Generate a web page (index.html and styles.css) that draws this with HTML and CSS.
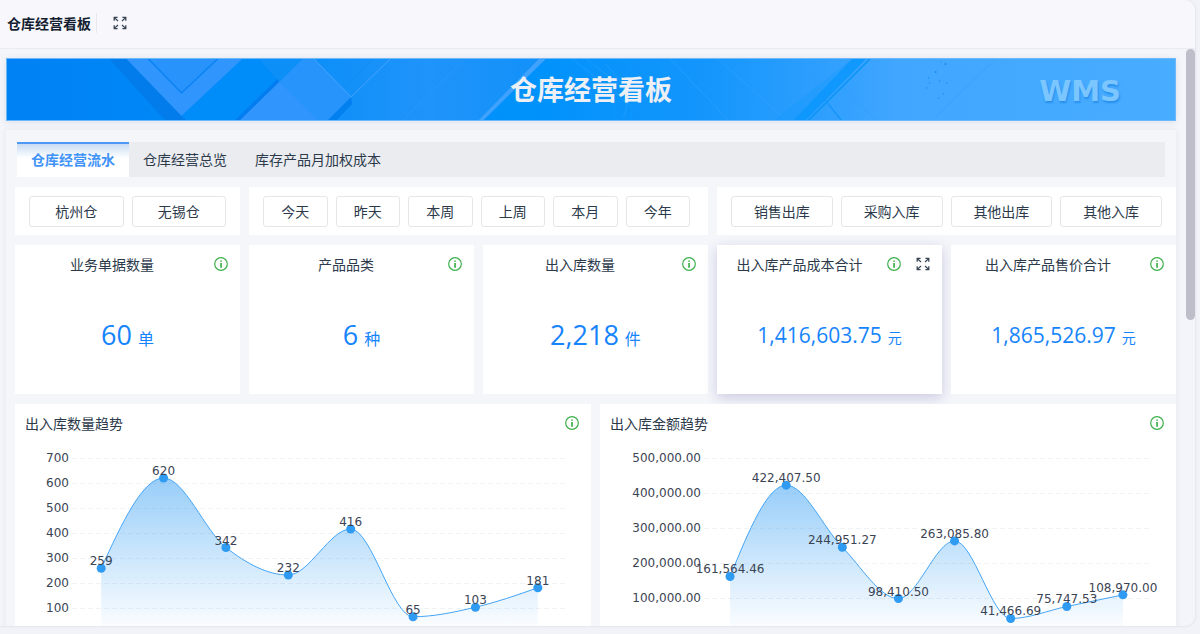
FILE: index.html
```html
<!DOCTYPE html>
<html lang="zh-CN">

<head>
    <meta charset="UTF-8">
    <meta name="viewport" content="width=device-width, initial-scale=1.0">
    <title>仓库经营看板</title>
    <link rel="stylesheet" href="styles.css">
</head>

<body>
    <!-- Shared icons -->
    <svg class="icon-defs" aria-hidden="true">
        <symbol id="icon-info" viewBox="0 0 14 14">
            <circle cx="7" cy="7" r="6.3" fill="none" stroke="currentColor" stroke-width="1.2" />
            <path d="M6.2 6.1h1.7v4.6H6.2zM6.2 3.4h1.7v1.4H6.2z" fill="currentColor" />
        </symbol>
        <symbol id="icon-full" viewBox="0 0 14 14">
            <path d="M1.2 4.8V1.4h3.4M1.4 1.6l3.6 3.4M9.4 1.4h3.4v3.4M12.6 1.6L9 5M1.2 9.2v3.4h3.4M1.4 12.4L5 9M9.4 12.6h3.4V9.2M12.6 12.4L9 9" fill="none" stroke="currentColor" stroke-width="1.3" />
        </symbol>
    </svg>

    <div class="app">
        <header class="topbar">
            <h2>仓库经营看板</h2>
            <button type="button" class="icon-btn full" aria-label="全屏"><svg><use href="#icon-full" /></svg></button>
        </header>

        <div class="main">
            <div class="content">
                <div class="banner">
                    <svg class="banner-art" viewBox="0 0 1171 63" preserveAspectRatio="xMidYMid slice" aria-hidden="true">
                        <defs>
                            <linearGradient id="sky">
                                <stop offset="0" stop-color="#0081f4" />
                                <stop offset="0.2" stop-color="#008bf8" />
                                <stop offset="0.45" stop-color="#0092fb" />
                                <stop offset="0.6" stop-color="#1496fc" />
                                <stop offset="0.7" stop-color="#2f9ffe" />
                                <stop offset="0.76" stop-color="#40a6ff" />
                                <stop offset="1" stop-color="#48adff" />
                            </linearGradient>
                            <linearGradient id="sheet">
                                <stop offset="0" stop-color="#0d8ff8" />
                                <stop offset="0.5" stop-color="#1f94fa" />
                                <stop offset="1" stop-color="#1291f9" />
                            </linearGradient>
                        </defs>
                        <rect width="1171" height="63" fill="url(#sky)" />
                        <path d="M102 0h20l62 63h-25z" fill="#027beb" />
                        <path d="M119 0h118l-62 58z" fill="#3096fd" />
                        <path d="M141 0h71l-37 35z" fill="#2993fc" />
                        <path d="M141 0l34 35 37-35" fill="none" stroke="#0a83f3" stroke-width="1.5" />
                        <path d="M237 0h60l-67 63h-50l-5-5z" fill="#008cf9" />
                        <path d="M252 0h45l-24 24z" fill="#0d8ff8" />
                        <path d="M228 63h7l38-39-2-3z" fill="#027cef" />
                        <path d="M307 0h230l-65 63H330z" fill="url(#sheet)" />
                        <path d="M273 24L297 0h10l38 39-24 24h-88z" fill="#2794fc" />
                        <path d="M273 24l39 39h-79z" fill="#3096fd" />
                        <path d="M321 63h9l16-17-1-7z" fill="#0380ef" />
                        <path d="M307 0l38 39 40-39" fill="none" stroke="#45a3fc" stroke-width="1" />
                        <path d="M368 0l-29 28" stroke="#0785ee" stroke-opacity="0.4" />
                        <path d="M460 0l-64 63" stroke="#3aa0fc" stroke-opacity="0.4" />
                        <path d="M534 0h7l-64 63h-5z" fill="#3fa2fd" />
                        <path d="M566 0l62 50M580 0l54 42M664 0l60 63M600 6q30 28 18 54M712 0l70 63" fill="none" stroke="#4bb0ff" stroke-opacity="0.3" />
                        <path d="M848 0h14l-62 63h-32z" fill="#0896fc" fill-opacity="0.25" />
                        <path d="M848 0h14l-62 63h-12z" fill="#0896fc" fill-opacity="0.75" />
                        <path d="M866 0l-63 63" stroke="#0994f8" stroke-width="1.5" />
                        <path d="M820 42l17 21" stroke="#1294f8" stroke-width="1.2" />
                        <path d="M839 30l33 33M992 0l-62 60M811 0v40M826 0l-42 42" stroke="#2b98f3" stroke-opacity="0.35" fill="none" />
                        <g fill="#168ff0">
                            <circle cx="941" cy="6" r="1" />
                            <circle cx="931" cy="14" r="1" />
                            <circle cx="924" cy="20" r="0.8" />
                            <circle cx="935" cy="23" r="0.8" />
                            <circle cx="942" cy="25" r="0.8" />
                            <circle cx="925" cy="25" r="0.8" />
                            <circle cx="922" cy="30" r="0.8" />
                            <circle cx="939" cy="36" r="0.8" />
                            <circle cx="934" cy="40" r="0.8" />
                            <circle cx="936" cy="4" r="0.6" />
                        </g>
                    </svg>
                    <h1>仓库经营看板</h1>
                    <span class="wms">WMS</span>
                </div>

                <div class="panel">
                    <nav class="tabs">
                        <button type="button" class="tab active">仓库经营流水</button>
                        <button type="button" class="tab">仓库经营总览</button>
                        <button type="button" class="tab">库存产品月加权成本</button>
                    </nav>

                    <div class="board">
                        <div class="filter span-2">
                            <button type="button">杭州仓</button>
                            <button type="button">无锡仓</button>
                        </div>
                        <div class="filter dates span-4">
                            <button type="button">今天</button>
                            <button type="button">昨天</button>
                            <button type="button">本周</button>
                            <button type="button">上周</button>
                            <button type="button">本月</button>
                            <button type="button">今年</button>
                        </div>
                        <div class="filter span-4">
                            <button type="button">销售出库</button>
                            <button type="button">采购入库</button>
                            <button type="button">其他出库</button>
                            <button type="button">其他入库</button>
                        </div>

                        <section class="card span-2">
                            <div class="card-head">
                                <h3>业务单据数量</h3>
                                <button type="button" class="icon-btn info" aria-label="说明"><svg><use href="#icon-info" /></svg></button>
                            </div>
                            <p class="value">60<small>单</small></p>
                        </section>
                        <section class="card span-2">
                            <div class="card-head">
                                <h3>产品品类</h3>
                                <button type="button" class="icon-btn info" aria-label="说明"><svg><use href="#icon-info" /></svg></button>
                            </div>
                            <p class="value">6<small>种</small></p>
                        </section>
                        <section class="card span-2">
                            <div class="card-head">
                                <h3>出入库数量</h3>
                                <button type="button" class="icon-btn info" aria-label="说明"><svg><use href="#icon-info" /></svg></button>
                            </div>
                            <p class="value">2,218<small>件</small></p>
                        </section>
                        <section class="card raised span-2">
                            <div class="card-head">
                                <h3>出入库产品成本合计</h3>
                                <button type="button" class="icon-btn info" aria-label="说明"><svg><use href="#icon-info" /></svg></button>
                                <button type="button" class="icon-btn full" aria-label="全屏"><svg><use href="#icon-full" /></svg></button>
                            </div>
                            <p class="value money">1,416,603.75<small>元</small></p>
                        </section>
                        <section class="card span-2">
                            <div class="card-head">
                                <h3>出入库产品售价合计</h3>
                                <button type="button" class="icon-btn info" aria-label="说明"><svg><use href="#icon-info" /></svg></button>
                            </div>
                            <p class="value money">1,865,526.97<small>元</small></p>
                        </section>

                        <section class="card chart-card span-5">
                            <div class="card-head">
                                <h3>出入库数量趋势</h3>
                                <button type="button" class="icon-btn info" aria-label="说明"><svg><use href="#icon-info" /></svg></button>
                            </div>
                            <svg class="chart" id="qty-chart"></svg>
                        </section>
                        <section class="card chart-card span-5">
                            <div class="card-head">
                                <h3>出入库金额趋势</h3>
                                <button type="button" class="icon-btn info" aria-label="说明"><svg><use href="#icon-info" /></svg></button>
                            </div>
                            <svg class="chart" id="amount-chart"></svg>
                        </section>
                    </div>
                </div>
            </div>
            <div class="scrollbar"><div class="thumb"></div></div>
        </div>
    </div>

    <script src="script.js"></script>
</body>

</html>
```

FILE: styles.css
```css
/* Basic Reset */
* {
    margin: 0;
    padding: 0;
    box-sizing: border-box;
}

body {
    font-family: "Noto Sans CJK SC", sans-serif;
    font-size: 14px;
    line-height: 20px;
    color: #2c3a4b;
    background-color: #f2f3f8;
    height: 100vh;
    padding: 0 5px 8px 0;
    overflow: hidden;
}

button {
    font: inherit;
    color: inherit;
    cursor: pointer;
}

.icon-defs {
    display: none;
}

/* Window */
.app {
    display: flex;
    flex-direction: column;
    height: 100%;
    background-color: #f4f5fa;
    border-radius: 0 10px 10px 0;
    box-shadow: 0 0 3px rgba(60, 70, 110, 0.16);
    overflow: hidden;
}

.topbar {
    display: flex;
    align-items: center;
    flex: none;
    height: 49px;
    padding: 0 0 2px 7px;
    background-color: #f7f7fc;
    border-bottom: 1px solid #e9ebf0;
}

.topbar h2 {
    padding-right: 5px;
    border-right: 1px solid #e8eaf0;
    font-size: 14px;
    font-weight: bold;
    color: #141e30;
}

.topbar .icon-btn {
    margin-left: 16px;
}

.icon-btn {
    flex: none;
    width: 14px;
    height: 14px;
    border: none;
    background: none;
}

.icon-btn svg {
    display: block;
    width: 14px;
    height: 14px;
}

.info {
    color: #3db04b;
}

.full {
    color: #3a4656;
}

.main {
    display: flex;
    flex: 1;
    min-height: 0;
}

.content {
    flex: 1;
    min-width: 0;
    padding: 9px 10px 0 6px;
    overflow: hidden;
}

/* Scrollbar */
.scrollbar {
    flex: none;
    width: 9px;
}

.thumb {
    height: 47%;
    border-radius: 5px;
    background-color: #bcbfca;
}

/* Banner */
.banner {
    position: relative;
    display: flex;
    align-items: center;
    justify-content: center;
    height: 63px;
    border: 1px solid #6bb8fb;
    box-shadow: 0 1px 6px rgba(60, 70, 110, 0.12);
}

.banner-art {
    position: absolute;
    inset: 0;
    width: 100%;
    height: 100%;
}

.banner h1 {
    position: relative;
    padding-bottom: 2px;
    font-size: 27px;
    line-height: 40px;
    color: #eceff4;
}

.wms {
    position: absolute;
    right: 54px;
    top: 16px;
    font: bold 29px/32px "DejaVu Sans", sans-serif;
    color: #7cc6ff;
    text-shadow: 1px 2px 2px rgba(0, 110, 220, 0.45);
}

/* Panel */
.panel {
    margin-top: 9px;
    padding: 12px 0 0 9px;
    background-color: #f4f6fa;
    box-shadow: 0 0 6px rgba(60, 70, 110, 0.08);
}

.tabs {
    display: flex;
    height: 35px;
    margin: 0 11px 10px 2px;
    background-color: #ebecf0;
}

.tab {
    padding: 0 14px 3px;
    border: none;
    border-top: 2px solid transparent;
    background: none;
}

.tab.active {
    border-top-color: #4c99f6;
    background: linear-gradient(#c9dcf4, #fff 14px) padding-box;
    font-weight: bold;
    color: #4193f7;
}

.board {
    display: grid;
    grid-template-columns: repeat(10, minmax(0, 1fr));
    gap: 10px 9px;
}

.span-2 {
    grid-column: span 2;
}

.span-4 {
    grid-column: span 4;
}

.span-5 {
    grid-column: span 5;
}

/* Filters */
.filter {
    display: flex;
    gap: 8px;
    padding: 9px 14px 8px;
    background-color: #fff;
}

.filter.dates {
    padding-right: 18px;
}

.filter button {
    flex: 1;
    height: 31px;
    padding-bottom: 2px;
    border: 1px solid #e4e6ea;
    border-radius: 3px;
    background-color: #fff;
}

/* Cards */
.card {
    display: flex;
    flex-direction: column;
    height: 149px;
    background-color: #fff;
}

.card.raised {
    box-shadow: 0 4px 12px rgba(80, 65, 150, 0.24);
}

.card-head {
    display: flex;
    align-items: center;
    gap: 15px;
    height: 40px;
    padding: 0 12px 2px 10px;
}

.card-head h3 {
    flex: 1;
    font-size: 14px;
    font-weight: normal;
    text-align: center;
    white-space: nowrap;
}

.value {
    margin-top: 30px;
    font: 27px/40px "Open Sans", "Noto Sans CJK SC", sans-serif;
    color: #1684fc;
    text-align: center;
}

.value small {
    margin-left: 6px;
    font-size: 16px;
}

.value.money {
    font-size: 21px;
}

.value.money small {
    font-size: 14px;
}

/* Charts */
.chart-card {
    height: 270px;
}

.chart-card h3 {
    text-align: left;
}

.chart {
    display: block;
    width: 100%;
    height: 230px;
}

.chart text {
    font: 12px "DejaVu Sans", sans-serif;
    fill: #3b4454;
}

.chart .grid {
    stroke: #f1f2f4;
    stroke-dasharray: 5 3;
}

.chart .line {
    fill: none;
    stroke: #45a5f5;
}

.chart .dot {
    fill: #309bf3;
}
```

FILE: script.js
```js
const SVG_NS = 'http://www.w3.org/2000/svg';
const PLOT_TOP = 14;
const PLOT_BOTTOM = 189;

function add(parent, tag, attrs, text) {
    const el = document.createElementNS(SVG_NS, tag);
    for (const key in attrs) el.setAttribute(key, attrs[key]);
    if (text !== undefined) el.textContent = text;
    parent.appendChild(el);
    return el;
}

// Monotone cubic curve through evenly spaced points
function smoothPath(pts) {
    const n = pts.length;
    const step = pts[1].x - pts[0].x;
    const slope = i => (pts[i + 1].y - pts[i].y) / step;
    const m = pts.map((p, i) => {
        if (i === 0 || i === n - 1) return 0;
        const a = slope(i - 1);
        const b = slope(i);
        if (a * b <= 0) return 0;
        return Math.sign(a) * Math.min(2 * Math.abs(a), 2 * Math.abs(b), Math.abs(a + b) / 2);
    });
    m[0] = (3 * slope(0) - m[1]) / 2;
    m[n - 1] = (3 * slope(n - 2) - m[n - 2]) / 2;

    const h = step / 3;
    let d = `M${pts[0].x} ${pts[0].y}`;
    for (let i = 1; i < n; i++) {
        const a = pts[i - 1];
        const b = pts[i];
        d += `C${a.x + h} ${a.y + m[i - 1] * h} ${b.x - h} ${b.y - m[i] * h} ${b.x} ${b.y}`;
    }
    return d;
}

function drawChart(id, opt) {
    const svg = document.getElementById(id);
    svg.innerHTML = '';
    const right = svg.clientWidth - opt.right;
    const band = (right - opt.left) / opt.data.length;
    const yOf = v => PLOT_BOTTOM - v / opt.max * (PLOT_BOTTOM - PLOT_TOP);
    const format = v => v.toLocaleString('en-US', {
        minimumFractionDigits: opt.digits,
        maximumFractionDigits: opt.digits
    });

    const defs = add(svg, 'defs', {});
    const fade = add(defs, 'linearGradient', { id: id + '-fade', x1: 0, y1: 0, x2: 0, y2: 1 });
    add(fade, 'stop', { offset: 0, 'stop-color': '#309bf3', 'stop-opacity': 0.5 });
    add(fade, 'stop', { offset: 1, 'stop-color': '#309bf3', 'stop-opacity': 0 });

    for (let v = opt.step; v <= opt.max; v += opt.step) {
        const y = Math.round(yOf(v)) + 0.5;
        add(svg, 'line', { class: 'grid', x1: opt.left + 2, x2: right - 2, y1: y, y2: y });
        add(svg, 'text', { x: opt.left - 1, y: y + 3, 'text-anchor': 'end' }, format(v));
    }

    const pts = opt.data.map((v, i) => ({ x: opt.left + band * (i + 0.5), y: yOf(v) }));
    const d = smoothPath(pts);
    add(svg, 'path', { d: `${d}V${PLOT_BOTTOM}H${pts[0].x}Z`, fill: `url(#${id}-fade)` });
    add(svg, 'path', { class: 'line', d: d });
    pts.forEach(p => add(svg, 'circle', { class: 'dot', cx: p.x, cy: p.y, r: 4.5 }));
    pts.forEach((p, i) => {
        add(svg, 'text', { x: p.x, y: p.y - 3, 'text-anchor': 'middle' }, format(opt.data[i]));
    });
}

function render() {
    drawChart('qty-chart', {
        left: 55, right: 22, max: 700, step: 100, digits: 0,
        data: [259, 620, 342, 232, 416, 65, 103, 181]
    });
    drawChart('amount-chart', {
        left: 102, right: 25, max: 500000, step: 100000, digits: 2,
        data: [161564.46, 422407.5, 244951.27, 98410.5, 263085.8, 41466.69, 75747.53, 108970]
    });
}

render();
window.addEventListener('resize', render);
```
